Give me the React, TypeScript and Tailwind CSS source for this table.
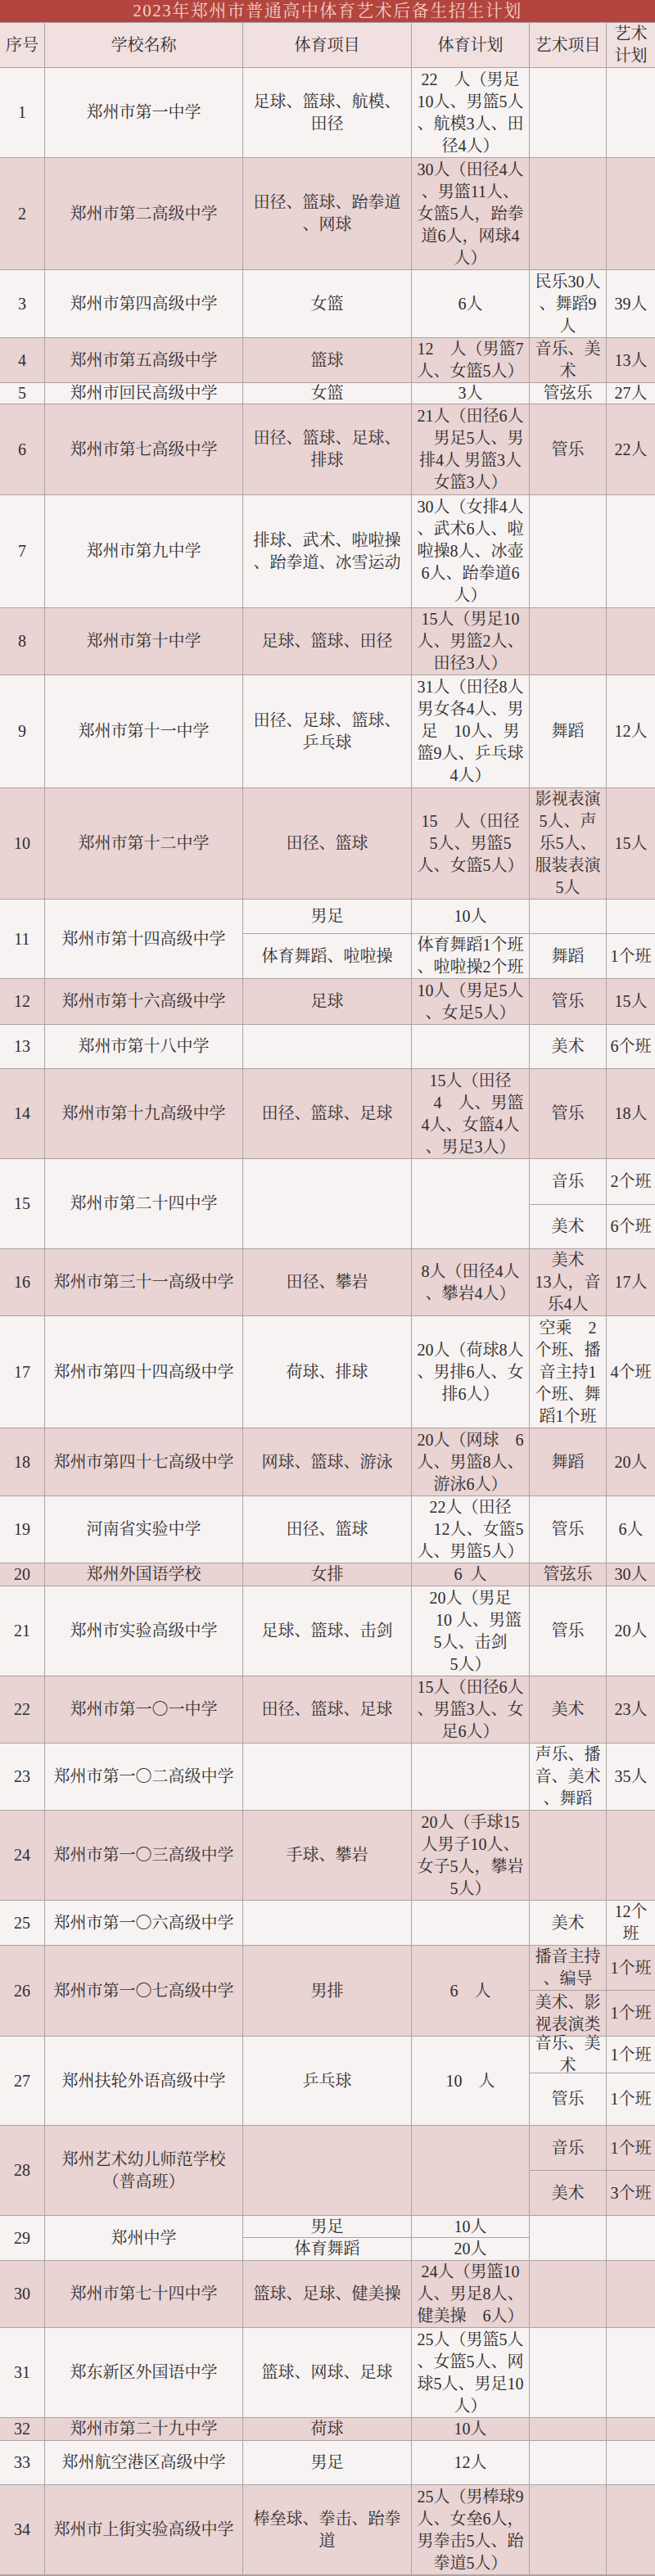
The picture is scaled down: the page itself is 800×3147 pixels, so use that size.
import { clsx } from "clsx";

type Lines = string | string[];
type CellData = { t?: Lines; span?: boolean };
type RowData = { pink: boolean; cells: CellData[] };

const PINK = "bg-[#e9d3d3]";
const WHITE = "bg-[#f7f3f3]";
const HEAD = "bg-[#f0e0e0]";

// one entry per school; cells run left to right, row-span-2 cells push the rest into the sub-row
const rows: RowData[] = [
  { pink: false, cells: [{ t: "1" }, { t: "郑州市第一中学" }, { t: ["足球、篮球、航模、", "田径"] }, { t: ["22　人（男足", "10人、男篮5人", "、航模3人、田", "径4人）"] }, {}, {}] },
  { pink: true, cells: [{ t: "2" }, { t: "郑州市第二高级中学" }, { t: ["田径、篮球、跆拳道", "、网球"] }, { t: ["30人（田径4人", "、男篮11人、", "女篮5人，跆拳", "道6人，网球4", "人）"] }, {}, {}] },
  { pink: false, cells: [{ t: "3" }, { t: "郑州市第四高级中学" }, { t: "女篮" }, { t: "6人" }, { t: ["民乐30人", "、舞蹈9", "人"] }, { t: "39人" }] },
  { pink: true, cells: [{ t: "4" }, { t: "郑州市第五高级中学" }, { t: "篮球" }, { t: ["12　人（男篮7", "人、女篮5人）"] }, { t: ["音乐、美", "术"] }, { t: "13人" }] },
  { pink: false, cells: [{ t: "5" }, { t: "郑州市回民高级中学" }, { t: "女篮" }, { t: "3人" }, { t: "管弦乐" }, { t: "27人" }] },
  { pink: true, cells: [{ t: "6" }, { t: "郑州市第七高级中学" }, { t: ["田径、篮球、足球、", "排球"] }, { t: ["21人（田径6人", "　男足5人、男", "排4人 男篮3人", "女篮3人）"] }, { t: "管乐" }, { t: "22人" }] },
  { pink: false, cells: [{ t: "7" }, { t: "郑州市第九中学" }, { t: ["排球、武术、啦啦操", "、跆拳道、冰雪运动"] }, { t: ["30人（女排4人", "、武术6人、啦", "啦操8人、冰壶", "6人、跆拳道6", "人）"] }, {}, {}] },
  { pink: true, cells: [{ t: "8" }, { t: "郑州市第十中学" }, { t: "足球、篮球、田径" }, { t: ["15人（男足10", "人、男篮2人、", "田径3人）"] }, {}, {}] },
  { pink: false, cells: [{ t: "9" }, { t: "郑州市第十一中学" }, { t: ["田径、足球、篮球、", "乒乓球"] }, { t: ["31人（田径8人", "男女各4人、男", "足　10人、男", "篮9人、乒乓球", "4人）"] }, { t: "舞蹈" }, { t: "12人" }] },
  { pink: true, cells: [{ t: "10" }, { t: "郑州市第十二中学" }, { t: "田径、篮球" }, { t: ["15　人（田径", "5人、男篮5", "人、女篮5人）"] }, { t: ["影视表演", "5人、声", "乐5人、", "服装表演", "5人"] }, { t: "15人" }] },
  { pink: false, cells: [{ t: "11", span: true }, { t: "郑州市第十四高级中学", span: true }, { t: "男足" }, { t: "10人" }, {}, {}, { t: "体育舞蹈、啦啦操" }, { t: ["体育舞蹈1个班", "、啦啦操2个班"] }, { t: "舞蹈" }, { t: "1个班" }] },
  { pink: true, cells: [{ t: "12" }, { t: "郑州市第十六高级中学" }, { t: "足球" }, { t: ["10人（男足5人", "、女足5人）"] }, { t: "管乐" }, { t: "15人" }] },
  { pink: false, cells: [{ t: "13" }, { t: "郑州市第十八中学" }, {}, {}, { t: "美术" }, { t: "6个班" }] },
  { pink: true, cells: [{ t: "14" }, { t: "郑州市第十九高级中学" }, { t: "田径、篮球、足球" }, { t: ["15人（田径", "　4　人、男篮", "4人、女篮4人", "、男足3人）"] }, { t: "管乐" }, { t: "18人" }] },
  { pink: false, cells: [{ t: "15", span: true }, { t: "郑州市第二十四中学", span: true }, { span: true }, { span: true }, { t: "音乐" }, { t: "2个班" }, { t: "美术" }, { t: "6个班" }] },
  { pink: true, cells: [{ t: "16" }, { t: "郑州市第三十一高级中学" }, { t: "田径、攀岩" }, { t: ["8人（田径4人", "、攀岩4人）"] }, { t: ["美术", "13人，音", "乐4人"] }, { t: "17人" }] },
  { pink: false, cells: [{ t: "17" }, { t: "郑州市第四十四高级中学" }, { t: "荷球、排球" }, { t: ["20人（荷球8人", "、男排6人、女", "排6人）"] }, { t: ["空乘　2", "个班、播", "音主持1", "个班、舞", "蹈1个班"] }, { t: "4个班" }] },
  { pink: true, cells: [{ t: "18" }, { t: "郑州市第四十七高级中学" }, { t: "网球、篮球、游泳" }, { t: ["20人（网球　6", "人、男篮8人、", "游泳6人）"] }, { t: "舞蹈" }, { t: "20人" }] },
  { pink: false, cells: [{ t: "19" }, { t: "河南省实验中学" }, { t: "田径、篮球" }, { t: ["22人（田径", "　12人、女篮5", "人、男篮5人）"] }, { t: "管乐" }, { t: "6人" }] },
  { pink: true, cells: [{ t: "20" }, { t: "郑州外国语学校" }, { t: "女排" }, { t: "6  人" }, { t: "管弦乐" }, { t: "30人" }] },
  { pink: false, cells: [{ t: "21" }, { t: "郑州市实验高级中学" }, { t: "足球、篮球、击剑" }, { t: ["20人（男足", "　10 人、男篮", "5人、击剑", "5人）"] }, { t: "管乐" }, { t: "20人" }] },
  { pink: true, cells: [{ t: "22" }, { t: "郑州市第一〇一中学" }, { t: "田径、篮球、足球" }, { t: ["15人（田径6人", "、男篮3人、女", "足6人）"] }, { t: "美术" }, { t: "23人" }] },
  { pink: false, cells: [{ t: "23" }, { t: "郑州市第一〇二高级中学" }, {}, {}, { t: ["声乐、播", "音、美术", "、舞蹈"] }, { t: "35人" }] },
  { pink: true, cells: [{ t: "24" }, { t: "郑州市第一〇三高级中学" }, { t: "手球、攀岩" }, { t: ["20人（手球15", "人男子10人、", "女子5人，攀岩", "5人）"] }, {}, {}] },
  { pink: false, cells: [{ t: "25" }, { t: "郑州市第一〇六高级中学" }, {}, {}, { t: "美术" }, { t: ["12个", "班"] }] },
  { pink: true, cells: [{ t: "26", span: true }, { t: "郑州市第一〇七高级中学", span: true }, { t: "男排", span: true }, { t: "6　人", span: true }, { t: ["播音主持", "、编导"] }, { t: "1个班" }, { t: ["美术、影", "视表演类"] }, { t: "1个班" }] },
  { pink: false, cells: [{ t: "27", span: true }, { t: "郑州扶轮外语高级中学", span: true }, { t: "乒乓球", span: true }, { t: "10　人", span: true }, { t: ["音乐、美", "术"] }, { t: "1个班" }, { t: "管乐" }, { t: "1个班" }] },
  { pink: true, cells: [{ t: "28", span: true }, { t: ["郑州艺术幼儿师范学校", "（普高班）"], span: true }, { span: true }, { span: true }, { t: "音乐" }, { t: "1个班" }, { t: "美术" }, { t: "3个班" }] },
  { pink: false, cells: [{ t: "29", span: true }, { t: "郑州中学", span: true }, { t: "男足" }, { t: "10人" }, { span: true }, { span: true }, { t: "体育舞蹈" }, { t: "20人" }] },
  { pink: true, cells: [{ t: "30" }, { t: "郑州市第七十四中学" }, { t: "篮球、足球、健美操" }, { t: ["24人（男篮10", "人、男足8人、", "健美操　6人）"] }, {}, {}] },
  { pink: false, cells: [{ t: "31" }, { t: "郑东新区外国语中学" }, { t: "篮球、网球、足球" }, { t: ["25人（男篮5人", "、女篮5人、网", "球5人、男足10", "人）"] }, {}, {}] },
  { pink: true, cells: [{ t: "32" }, { t: "郑州市第二十九中学" }, { t: "荷球" }, { t: "10人" }, {}, {}] },
  { pink: false, cells: [{ t: "33" }, { t: "郑州航空港区高级中学" }, { t: "男足" }, { t: "12人" }, {}, {}] },
  { pink: true, cells: [{ t: "34" }, { t: "郑州市上街实验高级中学" }, { t: ["棒垒球、拳击、跆拳", "道"] }, { t: ["25人（男棒球9", "人、女垒6人，", "男拳击5人、跆", "拳道5人）"] }, {}, {}] },
];

function Cell({ t, span, bg }: CellData & { bg: string }) {
  const lines = t == null ? [] : Array.isArray(t) ? t : [t];
  return (
    <div
      className={clsx(
        "flex flex-col items-center justify-center text-center whitespace-pre",
        bg,
        span && "row-span-2",
      )}
    >
      {lines.map((l, i) => (
        <span key={i}>{l}</span>
      ))}
    </div>
  );
}

export default function App() {
  return (
    <div className="w-[800px] bg-[#aaa3a3] font-['Liberation_Serif','Noto_Serif_CJK_SC','Noto_Sans_CJK_SC',serif] text-[20px] leading-[27px] text-[#302c2c]">
      <div className="h-[27px] bg-[#b3453e] text-center text-[21px] leading-[27px] tracking-[1.5px] text-[#f5cdc6]">
        2023年郑州市普通高中体育艺术后备生招生计划
      </div>
      <div className="grid grid-cols-[54px_241px_205px_143px_93px_59px] grid-rows-[54px_109px_136px_82px_54px_25px_110px_137px_81px_137px_135px_41px_54px_55px_53px_109px_55px_53px_81px_136px_82px_81px_27px_109px_81px_81px_109px_54px_54px_55px_44px_63px_54px_54px_26px_27px_81px_109px_27px_53px_109px] gap-px pt-px pb-[2px]">
        <Cell t="序号" bg={HEAD} />
        <Cell t="学校名称" bg={HEAD} />
        <Cell t="体育项目" bg={HEAD} />
        <Cell t="体育计划" bg={HEAD} />
        <Cell t="艺术项目" bg={HEAD} />
        <Cell t={["艺术", "计划"]} bg={HEAD} />
        {rows.map((r, ri) =>
          r.cells.map((c, ci) => (
            <Cell key={`${ri}-${ci}`} {...c} bg={r.pink ? PINK : WHITE} />
          )),
        )}
      </div>
    </div>
  );
}
